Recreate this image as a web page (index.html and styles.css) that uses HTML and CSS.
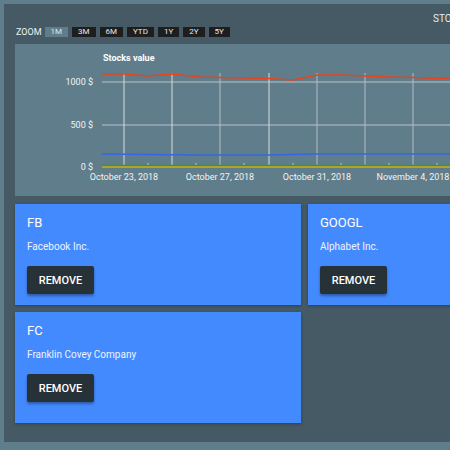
FILE: index.html
```html
<!DOCTYPE html>
<html>
<head>
<meta charset="utf-8">
<link rel="stylesheet" href="styles.css">
</head>
<body>
<div class="panel">
  <div class="header"><span class="header-title">STOCKS</span></div>
  <div class="zoom-row">
    <span class="zoom-label">ZOOM</span>
    <span class="zoom-btn active">1M</span>
    <span class="zoom-btn">3M</span>
    <span class="zoom-btn">6M</span>
    <span class="zoom-btn">YTD</span>
    <span class="zoom-btn">1Y</span>
    <span class="zoom-btn">2Y</span>
    <span class="zoom-btn">5Y</span>
  </div>
  <div class="chart">
    <svg class="chart-svg" width="435" height="152" viewBox="15 44 435 152">
      <text class="chart-title" x="103" y="61">Stocks value</text>
      <g class="hgrid">
        <line x1="102" y1="82" x2="450" y2="82"/>
        <line x1="102" y1="125" x2="450" y2="125"/>
        <line x1="102" y1="167" x2="450" y2="167"/>
      </g>
      <g class="vgrid">
        <line class="bright" x1="124" y1="73" x2="124" y2="166"/>
        <line class="bright" x1="172" y1="73" x2="172" y2="166"/>
        <line x1="220" y1="73" x2="220" y2="166"/>
        <line class="bright" x1="269" y1="73" x2="269" y2="166"/>
        <line x1="317" y1="73" x2="317" y2="166"/>
        <line x1="365" y1="73" x2="365" y2="166"/>
        <line x1="413" y1="73" x2="413" y2="166"/>
      </g>
      <g class="ticks">
        <line x1="148" y1="163" x2="148" y2="166"/>
        <line x1="196" y1="163" x2="196" y2="166"/>
        <line x1="244" y1="163" x2="244" y2="166"/>
        <line x1="293" y1="163" x2="293" y2="166"/>
        <line x1="341" y1="163" x2="341" y2="166"/>
        <line x1="389" y1="163" x2="389" y2="166"/>
        <line x1="437" y1="163" x2="437" y2="166"/>
      </g>
      <g class="ylabels">
        <text x="93" y="85">1000 $</text>
        <text x="93" y="128">500 $</text>
        <text x="93" y="170">0 $</text>
      </g>
      <polyline class="line-red" points="102,74 124,74 148,76 172,74 200,77 220,77.5 244,78 269,78.5 293,80 317,75 341,75 365,76 389,77 413,77.5 437,78.5 450,78"/>
      <polyline class="line-blue" points="102,154 150,154.5 200,155 269,155 293,154.5 317,154 450,154"/>
      <line class="line-green" x1="102" y1="165.5" x2="450" y2="165.5"/>
      <line class="line-olive" x1="102" y1="167" x2="450" y2="167"/>
      <g class="xlabels">
        <text x="124" y="180">October 23, 2018</text>
        <text x="220" y="180">October 27, 2018</text>
        <text x="317" y="180">October 31, 2018</text>
        <text x="413" y="180">November 4, 2018</text>
      </g>
    </svg>
  </div>
  <div class="cards">
    <div class="card">
      <div class="card-title">FB</div>
      <div class="card-desc">Facebook Inc.</div>
      <button class="remove-btn">REMOVE</button>
    </div>
    <div class="card">
      <div class="card-title">GOOGL</div>
      <div class="card-desc">Alphabet Inc.</div>
      <button class="remove-btn">REMOVE</button>
    </div>
    <div class="card">
      <div class="card-title">FC</div>
      <div class="card-desc">Franklin Covey Company</div>
      <button class="remove-btn">REMOVE</button>
    </div>
  </div>
</div>
</body>
</html>
```

FILE: styles.css
```css
html, body {
  margin: 0;
  padding: 0;
}
body {
  background: #607d8b;
  font-family: Roboto, "Liberation Sans", sans-serif;
  width: 450px;
  height: 450px;
  overflow: hidden;
}
.panel {
  margin: 4px 0 0 4px;
  width: 700px;
  height: 438px;
  background: #455a64;
  padding-left: 11px;
  box-sizing: border-box;
  display: flex;
  flex-direction: column;
}
.header {
  height: 23px;
  display: flex;
  align-items: flex-end;
  padding-left: 418px;
}
.header-title {
  font-size: 10px;
  color: #e6ebee;
  line-height: 12px;
  margin-bottom: 2px;
}
.zoom-row {
  display: flex;
  align-items: center;
  height: 10px;
  gap: 4px;
}
.zoom-label {
  font-size: 9px;
  color: #eef2f4;
  margin-left: 1px;
  margin-right: -1px;
}
.zoom-btn {
  font-size: 8px;
  line-height: 10px;
  height: 10px;
  padding: 0 6px;
  background: #1e1e1e;
  color: #e8e8e8;
}
.zoom-btn.active {
  background: #607d8b;
  color: #dfe6ea;
}
.chart {
  margin-top: 7px;
  height: 152px;
  background: #607d8b;
}
.chart-svg {
  display: block;
}
.chart-title {
  font-size: 9px;
  font-weight: bold;
  fill: #ffffff;
}
.hgrid line {
  stroke: #b9c3c8;
  stroke-width: 1;
}
.vgrid line {
  stroke: #b3bfc5;
  stroke-width: 1;
}
.vgrid line.bright {
  stroke: #d6dcdf;
}
.ticks line {
  stroke: #c8d0d4;
  stroke-width: 1;
}
.ylabels text {
  font-size: 9px;
  fill: #f2f4f5;
  text-anchor: end;
}
.xlabels text {
  font-size: 9px;
  fill: #f2f4f5;
  text-anchor: middle;
}
.line-red {
  fill: none;
  stroke: #e8441e;
  stroke-width: 1.6;
}
.line-blue {
  fill: none;
  stroke: #3468e0;
  stroke-width: 1.6;
}
.line-green {
  stroke: #22a03c;
  stroke-width: 1.6;
}
.line-olive {
  stroke: #c3a300;
  stroke-width: 1.6;
}
.cards {
  margin-top: 8px;
  display: grid;
  grid-template-columns: 286px 286px;
  grid-template-rows: 101px 111px;
  gap: 7px;
}
.card {
  background: #448aff;
  padding: 11px 12px 0;
  box-shadow: 0 1px 3px rgba(0, 0, 0, 0.3);
  display: flex;
  flex-direction: column;
  align-items: flex-start;
}
.card-title {
  font-size: 13px;
  line-height: 15px;
  color: #ffffff;
}
.card-desc {
  margin-top: 11px;
  font-size: 10px;
  line-height: 12px;
  color: #eef3ff;
}
.remove-btn {
  margin-top: 13px;
  width: 67px;
  height: 28px;
  border: none;
  border-radius: 2px;
  background: #263238;
  color: #ffffff;
  font-family: Roboto, "Liberation Sans", sans-serif;
  font-weight: 500;
  font-size: 11px;
  padding: 0;
  box-shadow: 0 2px 3px rgba(0, 0, 0, 0.35);
}
```
